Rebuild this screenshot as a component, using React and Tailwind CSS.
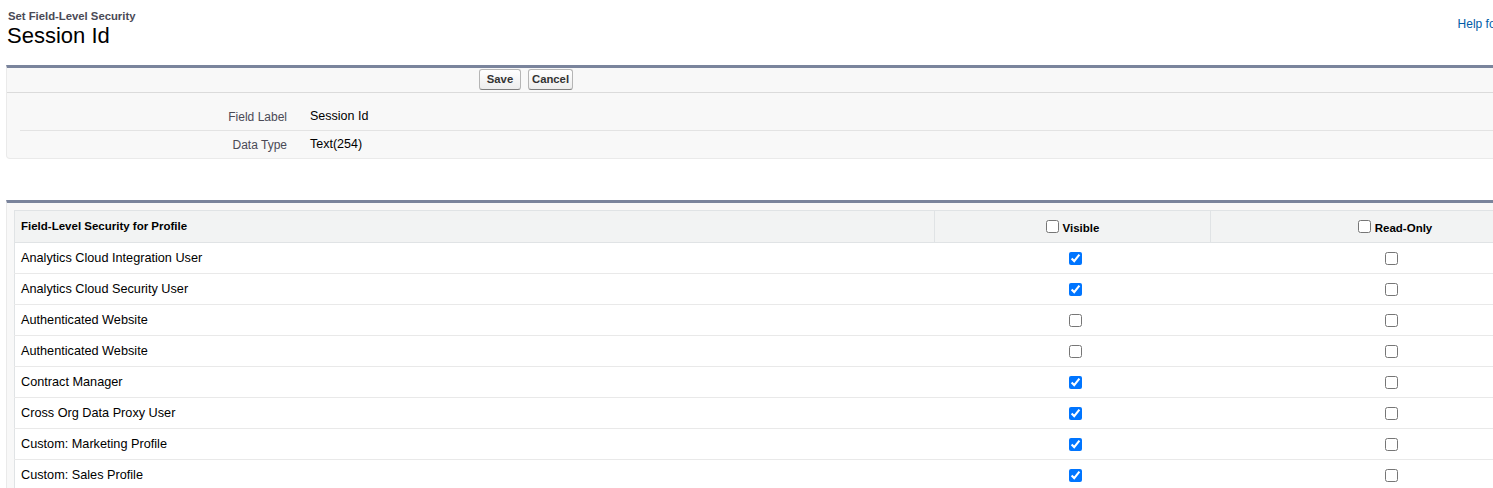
import React from "react";

/* ================= DATA ================= */

const profiles = [
  { name: "Analytics Cloud Integration User", visible: true },
  { name: "Analytics Cloud Security User", visible: true },
  { name: "Authenticated Website", visible: false },
  { name: "Authenticated Website", visible: false },
  { name: "Contract Manager", visible: true },
  { name: "Cross Org Data Proxy User", visible: true },
  { name: "Custom: Marketing Profile", visible: true },
  { name: "Custom: Sales Profile", visible: true },
  { name: "Custom: Support Profile", visible: true },
  { name: "Customer Community Login User", visible: false },
];

const details = [
  { label: "Field Label", value: "Session Id" },
  { label: "Data Type", value: "Text(254)" },
];

function Btn({ children, width }) {
  return (
    <button
      className={`${width} h-[21px] rounded-[3px] border border-[#b5b5b5] border-b-[#7f7f7f] bg-gradient-to-b from-white to-[#ededed] text-[11.3px] font-bold text-[#333]`}
    >
      {children}
    </button>
  );
}

export default function App() {
  return (
    <div
      className="w-[1493px] overflow-hidden bg-white text-black"
      style={{ fontFamily: '"Liberation Sans", Arial, sans-serif' }}
    >
      <div className="w-[1593px] pb-4">
        {/* ===== PAGE HEADER ===== */}
        <div className="flex items-start justify-between pt-[10px] pl-[8px] pr-[20px]">
          <div>
            <div className="text-[11.3px] font-bold leading-[13px] text-[#4a4a56]">
              Set Field-Level Security
            </div>
            <h1 className="-ml-[1px] text-[22px] leading-[25px] text-black">
              Session Id
            </h1>
          </div>
          <a className="mt-[5px] flex items-center gap-1 text-[12px] text-[#015ba7]">
            Help for this Page
            <span className="inline-flex h-[16px] w-[16px] items-center justify-center rounded-full bg-[#1797c0] text-[10px] font-bold text-white">
              ?
            </span>
          </a>
        </div>

        {/* ===== FIELD INFO ===== */}
        <div className="mt-[17px] ml-[6px] rounded-b-[4px] border border-t-[3px] border-[#eaeaea] border-t-[#7a849c] bg-[#f8f8f8]">
          <div className="flex h-[25px] items-start gap-[7px] border-b border-[#dbdbdb] pt-[1px] pl-[472px]">
            <Btn width="w-[42px]">Save</Btn>
            <Btn width="w-[45px]">Cancel</Btn>
          </div>
          <div className="pt-[10px] pl-[13px]">
            {details.map((d, i) => (
              <div
                key={d.label}
                className={`flex h-[27px] items-center ${
                  i === 0 ? "box-content border-b border-[#e3e3e3]" : ""
                }`}
              >
                <div className="w-[279px] pr-[12px] text-right text-[12px] text-[#4a4a56]">
                  {d.label}
                </div>
                <div className="pl-[11px] text-[12.5px] text-black">{d.value}</div>
              </div>
            ))}
          </div>
        </div>

        {/* ===== PROFILE SECURITY ===== */}
        <div className="mt-[41px] ml-[6px] rounded-b-[4px] border border-t-[3px] border-[#eaeaea] border-t-[#7a849c] bg-[#f8f8f8] px-[7px] pt-[7px] pb-[7px]">
          <table className="w-[1565px] table-fixed border-collapse border border-[#e0e3e5] bg-white">
            <colgroup>
              <col className="w-[920px]" />
              <col className="w-[276px]" />
              <col className="w-[369px]" />
            </colgroup>
            <thead>
              <tr className="h-[32px] bg-[#f2f3f3] text-[11.5px] font-bold">
                <th className="border border-[#e0e3e5] pl-[6px] text-left">
                  Field-Level Security for Profile
                </th>
                <th className="border border-[#e0e3e5] pt-[6px] text-center">
                  <label className="inline-flex items-center">
                    <input type="checkbox" className="mr-[4px] -mt-[4px]" />
                    Visible
                  </label>
                </th>
                <th className="border border-[#e0e3e5] pt-[6px] text-center">
                  <label className="inline-flex items-center">
                    <input type="checkbox" className="mr-[4px] -mt-[4px]" />
                    Read-Only
                  </label>
                </th>
              </tr>
            </thead>
            <tbody>
              {profiles.map((p, i) => (
                <tr
                  key={i}
                  className="h-[31px] border-b border-[#e9e9e9] text-[12.7px]"
                >
                  <td className="pl-[6px] pt-[1px]">{p.name}</td>
                  <td className="pl-[6px] text-center">
                    <input
                      type="checkbox"
                      defaultChecked={p.visible}
                      className="align-middle"
                    />
                  </td>
                  <td className="pr-[6px] text-center">
                    <input type="checkbox" className="align-middle" />
                  </td>
                </tr>
              ))}
            </tbody>
          </table>
        </div>
      </div>
    </div>
  );
}
